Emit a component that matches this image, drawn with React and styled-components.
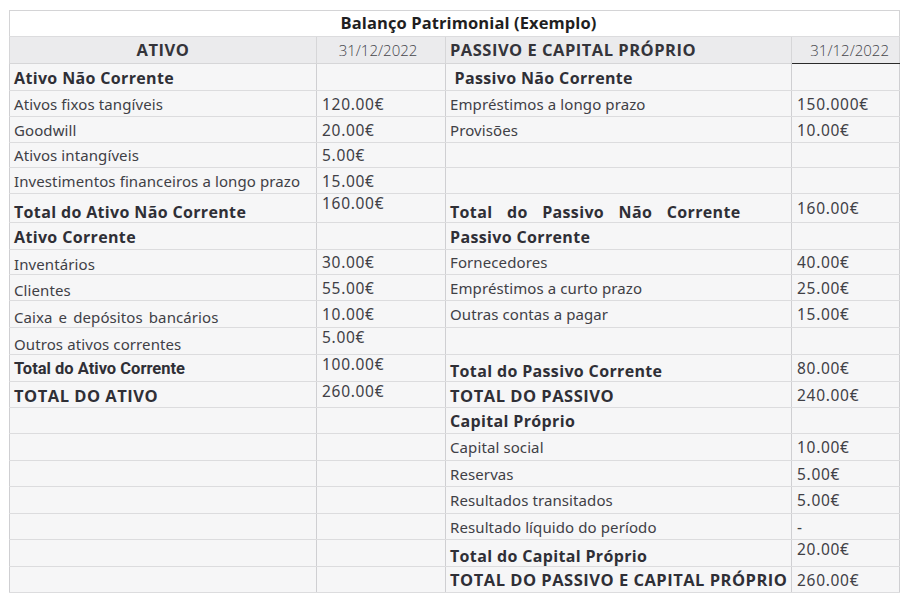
import React from 'react';
import styled, { createGlobalStyle, css } from 'styled-components';

const GlobalStyle = createGlobalStyle`
  html, body {
    margin: 0;
    padding: 0;
    background: #ffffff;
  }
`;

const Page = styled.div`
  width: 900px;
  height: 600px;
  padding: 10px 0 0 9px;
  box-sizing: border-box;
  background: #fff;
`;

const Sheet = styled.table`
  width: 890px;
  border-collapse: collapse;
  table-layout: fixed;
  border: 1px solid #d4d4d6;
  color: #3a3a40;
  line-height: 1.15;
`;

const TitleRow = styled.tr`
  height: 26px;
`;

const TitleCell = styled.td`
  padding: 0 0 0 28px;
  background: #fff;
  text-align: center;
  font-family: 'Open Sans', sans-serif;
  font-weight: 700;
  font-size: 16.5px;
  letter-spacing: 0.1px;
  color: #1f1f22;
  border-bottom: 1px solid #dcdcde;
`;

const HeadRow = styled.tr`
  height: 27px;
`;

const HeadCell = styled.th`
  padding: 1px 4px 0;
  background: #ebebed;
  border: 1px solid #d6d6d8;
  font-weight: 700;
  font-family: 'Open Sans', sans-serif;
  font-size: 16.5px;
  letter-spacing: 0.5px;
  color: #34343a;
  text-align: ${(p) => p.$align || 'center'};
  ${(p) =>
    p.$date &&
    css`
      font-weight: 300;
      font-size: 15px;
      letter-spacing: 0;
      color: #45454b;
      padding: 2px 10px 0 4px;
    `}
  ${(p) =>
    p.$underline &&
    css`
      border-bottom: 1.5px solid #2a2a2a;
    `}
`;

const kinds = {
  item: css`
    font-family: 'Noto Sans', sans-serif;
    font-weight: 400;
    font-size: 15px;
    letter-spacing: 0.1px;
    color: #404046;
  `,
  value: css`
    font-family: 'Noto Sans', sans-serif;
    font-weight: 400;
    font-size: 15.5px;
    letter-spacing: 0.7px;
    color: #404046;
  `,
  section: css`
    font-family: 'Open Sans', sans-serif;
    font-weight: 700;
    font-size: 16px;
    letter-spacing: 0.35px;
    color: #2f2f36;
  `,
  condensed: css`
    font-family: 'Roboto', sans-serif;
    font-weight: 700;
    font-size: 16.5px;
    letter-spacing: 0;
    color: #2f2f36;
  `,
  grand: css`
    font-family: 'Open Sans', sans-serif;
    font-weight: 700;
    font-size: 16.5px;
    letter-spacing: 0.5px;
    color: #2f2f36;
  `,
};

const Cell = styled.td`
  padding: 0 4px;
  background: #f6f6f7;
  border-top: 1px solid #dcdcde;
  border-bottom: 1px solid #dcdcde;
  border-left: 1px solid #cfcfd2;
  border-right: 1px solid #cfcfd2;
  white-space: nowrap;
  overflow: hidden;
  vertical-align: ${(p) => p.$valign || 'middle'};
  padding-top: ${(p) => (p.$valign === 'top' ? '1px' : p.$valign === 'bottom' ? '0' : '2px')};
  padding-bottom: ${(p) => (p.$valign === 'bottom' ? '1px' : '0')};
  word-spacing: ${(p) => p.$spread || 'normal'};
  ${(p) => kinds[p.$kind || 'item']}
`;

const ValueCell = styled(Cell)`
  padding-left: 5px;
`;

const Row = styled.tr`
  height: ${(p) => p.$h}px;
`;

const rows = [
  { h: 27, l: 'Ativo Não Corrente', lk: 'section', r: '\u00a0Passivo Não Corrente', rk: 'section' },
  { h: 26, l: 'Ativos fixos tangíveis', lv: '120.00€', r: 'Empréstimos a longo prazo', rv: '150.000€' },
  { h: 26, l: 'Goodwill', lv: '20.00€', r: 'Provisões', rv: '10.00€' },
  { h: 25, l: 'Ativos intangíveis', lv: '5.00€' },
  { h: 26, l: 'Investimentos financeiros a longo prazo', lv: '15.00€' },
  {
    h: 29,
    l: 'Total do Ativo Não Corrente',
    lk: 'section',
    la: 'bottom',
    lv: '160.00€',
    lva: 'top',
    r: 'Total do Passivo Não Corrente',
    rk: 'section',
    ra: 'bottom',
    rs: '10px',
    rv: '160.00€',
  },
  { h: 27, l: 'Ativo Corrente', lk: 'section', r: 'Passivo Corrente', rk: 'section' },
  { h: 25, l: 'Inventários', lv: '30.00€', la: 'bottom', r: 'Fornecedores', rv: '40.00€' },
  { h: 26, l: 'Clientes', la: 'bottom', lv: '55.00€', r: 'Empréstimos a curto prazo', rv: '25.00€' },
  { h: 27, l: 'Caixa e depósitos bancários', la: 'bottom', ls: '2px', lv: '10.00€', r: 'Outras contas a pagar', rv: '15.00€' },
  { h: 27, l: 'Outros ativos correntes', la: 'bottom', lv: '5.00€', lva: 'top' },
  {
    h: 27,
    l: 'Total do Ativo Corrente',
    lk: 'condensed',
    lv: '100.00€',
    lva: 'top',
    r: 'Total do Passivo Corrente',
    rk: 'section',
    ra: 'bottom',
    rv: '80.00€',
  },
  { h: 26, l: 'TOTAL DO ATIVO', lk: 'grand', la: 'bottom', lv: '260.00€', lva: 'top', r: 'TOTAL DO PASSIVO', rk: 'grand', ra: 'bottom', rv: '240.00€' },
  { h: 26, r: 'Capital Próprio', rk: 'section' },
  { h: 27, r: 'Capital social', rv: '10.00€' },
  { h: 26, r: 'Reservas', rv: '5.00€' },
  { h: 27, r: 'Resultados transitados', rv: '5.00€' },
  { h: 26, r: 'Resultado líquido do período', rv: '-' },
  { h: 27, r: 'Total do Capital Próprio', rk: 'section', ra: 'bottom', rv: '20.00€', rva: 'top' },
  { h: 26, r: 'TOTAL DO PASSIVO E CAPITAL PRÓPRIO', rk: 'grand', rv: '260.00€' },
];

const App = () => (
  <Page>
    <GlobalStyle />
    <Sheet>
      <colgroup>
        <col style={{ width: 307 }} />
        <col style={{ width: 129 }} />
        <col style={{ width: 346 }} />
        <col style={{ width: 108 }} />
      </colgroup>
      <tbody>
        <TitleRow>
          <TitleCell colSpan={4}>Balanço Patrimonial (Exemplo)</TitleCell>
        </TitleRow>
        <HeadRow>
          <HeadCell>ATIVO</HeadCell>
          <HeadCell $date>31/12/2022</HeadCell>
          <HeadCell $align="left">PASSIVO E CAPITAL PRÓPRIO</HeadCell>
          <HeadCell $date $align="right" $underline>
            31/12/2022
          </HeadCell>
        </HeadRow>
        {rows.map((row, i) => (
          <Row key={i} $h={row.h}>
            <Cell $kind={row.lk} $valign={row.la} $spread={row.ls}>
              {row.l}
            </Cell>
            <ValueCell $kind="value" $valign={row.lva}>
              {row.lv}
            </ValueCell>
            <Cell $kind={row.rk} $valign={row.ra} $spread={row.rs}>
              {row.r}
            </Cell>
            <ValueCell $kind="value" $valign={row.rva}>
              {row.rv}
            </ValueCell>
          </Row>
        ))}
      </tbody>
    </Sheet>
  </Page>
);

export default App;
